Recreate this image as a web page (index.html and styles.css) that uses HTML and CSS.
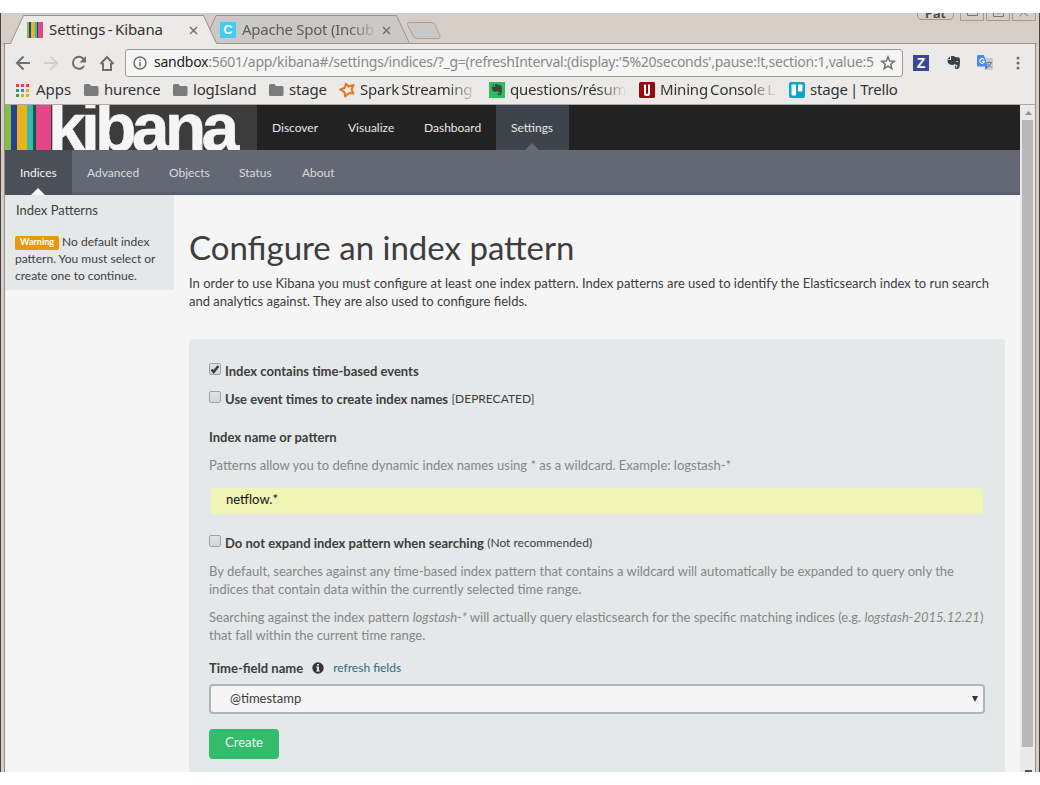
FILE: index.html
```html
<!DOCTYPE html>
<html lang="en">
<head>
<meta charset="utf-8">
<title>Settings - Kibana</title>
<link rel="stylesheet" href="styles.css">
</head>
<body>
<div class="window">
  <div class="tabstrip">
    <svg class="tab-shapes" width="1040" height="31" viewBox="0 13 1040 31">
      <path d="M3 43.5H1037" stroke="#9a948c" fill="none"/>
      <path d="M209.500 30L216 15.500H396.500L409.500 43.500H216.500Z" fill="#cac9c7" stroke="#9a948c"/>
      <path d="M3.500 44V43.500H10.500L23.500 15.500H203.500L216.500 43.500V44.500H3.500Z" fill="#ebeae8"/>
      <path d="M3.500 43.500H10.500L23.500 15.500H203.500L216.500 43.500" fill="none" stroke="#9a948c"/>
      <path d="M409.500 22.500H432Q434 22.500 434.600 24L440 36Q440.700 38.500 438.500 38.500H416.500Q414.500 38.500 413.700 37L407.500 24.500Q407 22.500 409.500 22.500Z" fill="#cac9c7" stroke="#a5a19b"/>
      <g fill="none" stroke="#9f9994">
        <path d="M917.500 13V15Q917.500 19.500 922 19.500H949Q953.500 19.500 953.500 15V13"/>
        <path d="M960.500 13V20.500H983.500V13M986.500 13V20.500H1009.500V13M1012.500 13V20.500H1035.500V13"/>
      </g>
      <g fill="none" stroke="#77736f"><path d="M967.500 13V15.500H977.500V13M993.500 13V16.500H1003.500V13M996.500 13H1000.500M1019.500 16L1023.500 12.500L1028 16"/></g>
      <text class="profile" x="925" y="18">Pat</text>
    </svg>
    <div class="tab tab-one">
      <svg width="16" height="16" shape-rendering="crispEdges"><path fill="#7fbf3f" d="M0 0h2v16H0z"/><path fill="#27408f" d="M2 0h2v16H2z"/><path fill="#e8b31c" d="M4 0h4v16H4z"/><path fill="#3ab7ae" d="M8 0h2v16H8z"/><path fill="#075b4f" d="M10 0h1v16h-1z"/><path fill="#e64588" d="M11 0h5v16h-5z"/></svg>
      <span class="tab-title t-settings">Settings - Kibana</span>
      <svg class="close" width="9" height="9"><path d="M1 1l7 7M8 1l-7 7" stroke="#737373" stroke-width="1.500"/></svg>
    </div>
    <div class="tab tab-two">
      <span class="c-icon">C</span>
      <span class="tab-title t-spot">Apache Spot (Incub</span>
      <svg class="close" width="9" height="9"><path d="M1 1l7 7M8 1l-7 7" stroke="#737373" stroke-width="1.500"/></svg>
    </div>
  </div>

  <div class="toolbar">
    <div class="nav-icons">
      <svg width="110" height="28" viewBox="10 48 110 28" fill="none" stroke="#6e6e6e" stroke-width="2">
        <path d="M30 62H17M23.500 55.500L17 62L23.500 68.500"/>
        <path d="M44 62H57M50.500 55.500L57 62L50.500 68.500" stroke="#cfcecc"/>
        <path d="M84 65A6 6 0 1 1 83.500 58"/><path d="M86 55V61.500H79.500Z" fill="#6e6e6e" stroke="none"/>
        <path d="M100.500 63L107 56L113.500 63M103 62V69H111V62" stroke-width="2"/>
      </svg>
    </div>
    <div class="omnibox">
      <svg width="14" height="14" fill="none" stroke="#6e6e6e" stroke-width="1.500"><circle cx="7" cy="7" r="6"/><path d="M7 6v4.500M7 3.500v1.500"/></svg>
      <span class="url"><b>sandbox</b>:5601/app/kibana#/settings/indices/?_g=(refreshInterval:(display:'5%20seconds',pause:!t,section:1,value:5</span>
      <svg class="star" width="16" height="16"><path d="M8 1.800l1.700 4.200 4.500.3-3.500 2.900 1.200 4.500L8 11.200l-3.900 2.500 1.200-4.500-3.500-2.900 4.500-.3z" fill="none" stroke="#6e6e6e" stroke-width="1.400"/></svg>
    </div>
    <div class="extensions">
      <span class="z-icon">Z</span>
      <svg width="14" height="16" viewBox="0 0 14 16"><path fill="#39424a" d="M3 1.500L0.300 4.300H3zM4 1h3l1 1 4 .6c1.300.4 1.300 6 .5 9.500-.4 1.600-1.500 2-3 2-2 0-2.500-3.500-.3-3.600v1.300c-.8.300-.3 1 .4.900 1 0 1.100-2.700-.2-2.900-1 0-1.700-.6-2-.8-.2 1.300-3.500 1-5 .2C.8 8.500.4 6 .5 5H4z"/><path d="M9.500 6.500h1.500" stroke="#ddd"/></svg>
      <svg width="17" height="16" viewBox="0 0 17 16"><path fill="#c9cbce" d="M7 3h8q1 0 1 1v10q0 1-1 1h-6z"/><path fill="#4889f0" d="M1.200 0H7l3.800 11.500H1.200Q0 11.500 0 10.300V1.200Q0 0 1.200 0z"/><path fill="#2c62c9" d="M8 11.500h3L8.500 15z"/><path d="M7 4.700A2.300 2.300 0 1 0 7.300 6.500H5" fill="none" stroke="#fff" stroke-width="1.100"/><path d="M10 7.500h5M12.500 6.500v1M14 8q-1 3-3.500 4M11 8.500q1 2.500 3.500 4" stroke="#66788a" fill="none"/></svg>
      <svg class="dots" width="4" height="14" fill="#6e6e6e"><circle cx="2" cy="2" r="1.500"/><circle cx="2" cy="7" r="1.500"/><circle cx="2" cy="12" r="1.500"/></svg>
    </div>
  </div>

  <div class="bookmarks">
    <div class="bm bm-apps"><svg width="13" height="13" shape-rendering="crispEdges"><path fill="#ea4335" d="M0 0h3v3H0zM5 0h3v3H5zM10 0h3v3h-3z"/><path fill="#34a05a" d="M0 5h3v3H0zM0 10h3v3H0z"/><path fill="#3b82ee" d="M5 5h3v3H5z"/><path fill="#f4a60b" d="M10 5h3v3h-3zM5 10h3v3H5zM10 10h3v3h-3z"/></svg><span>Apps</span></div>
    <div class="bm bm-hurence"><svg width="15" height="12"><path class="folder" d="M1.500 0h4L7 2h6q1.500 0 1.500 1.500v7q0 1.500-1.500 1.500H1.500Q0 12 0 10.500v-9Q0 0 1.500 0z"/></svg><span>hurence</span></div>
    <div class="bm bm-log"><svg width="15" height="12"><path class="folder" d="M1.500 0h4L7 2h6q1.500 0 1.500 1.500v7q0 1.500-1.500 1.500H1.500Q0 12 0 10.500v-9Q0 0 1.500 0z"/></svg><span>logIsland</span></div>
    <div class="bm bm-stage"><svg width="15" height="12"><path class="folder" d="M1.500 0h4L7 2h6q1.500 0 1.500 1.500v7q0 1.500-1.500 1.500H1.500Q0 12 0 10.500v-9Q0 0 1.500 0z"/></svg><span>stage</span></div>
    <div class="bm bm-spark"><svg width="16" height="16"><path d="M7 1.700L9.500 4.500L14.500 3L12.500 7.500L14.500 11.500L10.200 11L6.200 14.500L5.500 10.200L1.200 7.500L5.500 6Z" fill="none" stroke="#e87424" stroke-width="2" stroke-linejoin="round"/></svg><span>Spark Streaming</span></div>
    <div class="bm bm-questions"><svg width="16" height="16"><path fill="#2dbe60" d="M0 0h16v16H0z"/><path fill="#3b4a40" d="M5 2L2.800 4.300H5zM6 2h2l1 .8 3 .5c1.200.4 1.200 5 .5 8-.3 1.700-1.200 2-2.500 2-1.800 0-2.200-3-.3-3v1c-.8.200-.2.800.4.800.8-.2.900-2.200-.2-2.400-.8 0-1.400-.4-1.700-.6-.3 1-3 .8-4.200.1C3 8 2.800 6 2.900 5H6z"/></svg><span>questions/résum</span></div>
    <div class="bm bm-mining"><svg width="16" height="16"><rect width="16" height="16" rx="1.500" fill="#930b0d"/><path d="M5 2.500h2V11q0 1 1 1t1-1V2.500h2V12q0 2-2 2H7q-2 0-2-2z" fill="#fff"/></svg><span>Mining Console L</span></div>
    <div class="bm bm-trello"><svg width="16" height="16"><rect width="16" height="16" rx="2" fill="#0aa5c9"/><rect x="2.500" y="2.500" width="4.500" height="11" rx=".7" fill="#fff"/><rect x="9" y="2.500" width="4.500" height="7" rx=".7" fill="#fff"/></svg><span>stage | Trello</span></div>
  </div>

  <div class="viewport">
    <div class="page">
      <nav class="main-nav">
        <div class="logo"><i class="s1"></i><i class="s2"></i><i class="s3"></i><i class="s4"></i><i class="s5"></i><i class="s6"></i><span>kibana</span></div>
        <a class="discover">Discover</a><a class="visualize">Visualize</a><a class="dashboard">Dashboard</a><a class="settings active">Settings</a>
      </nav>
      <nav class="sub-nav">
        <a class="indices active">Indices</a><a class="advanced">Advanced</a><a class="objects">Objects</a><a class="status">Status</a><a>About</a>
      </nav>
      <div class="columns">
        <aside class="sidebar">
          <h5>Index Patterns</h5>
          <p><span class="label">Warning</span> No default index<br>pattern. You must select or<br>create one to continue.</p>
        </aside>
        <main>
          <h1>Configure an index pattern</h1>
          <p class="intro">In order to use Kibana you must configure at least one index pattern. Index patterns are used to identify the Elasticsearch index to run search<br>and analytics against. They are also used to configure fields.</p>
          <form class="panel">
            <div class="check"><span class="box"><svg width="12" height="12"><path d="M2.500 6.500L4.700 9L9.300 3" fill="none" stroke="#3c3c3c" stroke-width="2.500"/></svg></span><b>Index contains time-based events</b></div>
            <div class="check"><span class="box"></span><b>Use event times to create index names</b>&nbsp;<small>[DEPRECATED]</small></div>
            <div class="field-label pattern-label">Index name or pattern</div>
            <p class="help">Patterns allow you to define dynamic index names using * as a wildcard. Example: logstash-*</p>
            <div class="input">netflow.*</div>
            <div class="check expand"><span class="box"></span><b>Do not expand index pattern when searching</b>&nbsp;<small>(Not recommended)</small></div>
            <p class="help">By default, searches against any time-based index pattern that contains a wildcard will automatically be expanded to query only the<br>indices that contain data within the currently selected time range.</p>
            <p class="help">Searching against the index pattern <em>logstash-*</em> will actually query elasticsearch for the specific matching indices (e.g. <em>logstash-2015.12.21</em>)<br>that fall within the current time range.</p>
            <div class="field-label time-label">Time-field name <svg width="12" height="12"><circle cx="6" cy="6" r="5.700" fill="#343434"/><path d="M5 2h2v1.600H5zM4.200 4.600H7v3.800h.8V9.600H4.200V8.400H5V5.700h-.8z" fill="#e4e8e8"/></svg><a>refresh fields</a></div>
            <div class="select"><span>@timestamp</span><svg width="6" height="6"><path d="M0 0h6L3 6z" fill="#343434"/></svg></div>
            <button type="button">Create</button>
          </form>
        </main>
      </div>
    </div>
    <div class="scrollbar"><svg width="7" height="4"><path d="M0 4L3.500 0L7 4z" fill="#929292"/></svg><div class="thumb"></div><div class="down"></div></div>
  </div>
</div>
</body>
</html>
```
FILE: styles.css
```css
* { box-sizing: border-box; }
body { margin: 0; background: #fff; overflow: hidden; }
.window {
  position: relative; margin-top: 13px; width: 1040px; height: 759px; overflow: hidden;
  background: #ebeae8; font-family: "Noto Sans", sans-serif; color: #333;
  border-left: 1px solid #434240; border-right: 1px solid #434240;
}
.window::before, .window::after {
  content: ""; position: absolute; z-index: 2; top: 31px; bottom: 0; width: 3px; background: #d6cdc7;
}
.window::before { left: 0; border-right: 1px solid #998d85; }
.window::after { right: 0; border-left: 1px solid #998d85; }
.tabstrip { position: relative; height: 31px; background: #d6cdc7; display: flex; }
.tab-shapes { position: absolute; left: -1px; top: 0; }
.profile { font-size: 13px; font-weight: 600; fill: #444; }
.tab { position: relative; display: flex; align-items: center; height: 30px; padding-top: 4px; white-space: nowrap; }
.tab-one { margin-left: 26px; width: 193px; }
.tab-title { margin-left: 6px; margin-top: -2px; font-size: 15px; line-height: 20px; }
.t-settings { width: 140px; letter-spacing: -0.1px; word-spacing: -1.300px; }
.t-spot { width: 140px; overflow: hidden; letter-spacing: -0.25px; color: #5b5b5b; -webkit-mask-image: linear-gradient(90deg, #000 108px, transparent 136px); mask-image: linear-gradient(90deg, #000 108px, transparent 136px); }
.c-icon { width: 16px; height: 16px; background: #44cbf5; color: #fff; font: bold 13px/16px "Liberation Sans", sans-serif; text-align: center; }
.toolbar { height: 37px; display: flex; align-items: center; }
.nav-icons { width: 124px; padding-left: 9px; line-height: 0; }
.omnibox { width: 778px; height: 28px; display: flex; align-items: center; padding-left: 7px; background: #f5f5f5; border: 1px solid #9d9993; border-radius: 3px; }
.url { width: 722px; margin-left: 7px; margin-top: -2px; overflow: hidden; white-space: nowrap; color: #898989; font-size: 14px; line-height: 22px; letter-spacing: -0.25px; }
.url b { font-weight: 400; color: #222; }
.star { margin-left: 4px; }
.extensions { display: flex; align-items: center; margin-left: 10px; }
.z-icon { width: 16px; height: 16px; background: #3b4895; color: #fff; font: bold 14px/16px "Liberation Sans", sans-serif; text-align: center; }
.extensions svg { margin-left: 18px; }
.extensions svg + svg { margin-left: 16px; }
.extensions .dots.dots { margin-left: 22px; }
.bookmarks { height: 24px; display: flex; align-items: flex-start; padding-left: 15px; border-bottom: 1px solid #a9a8a6; font-size: 15px; line-height: 20px; white-space: nowrap; letter-spacing: -0.2px; word-spacing: -1.500px; }
.bm { display: flex; align-items: center; height: 18px; flex: none; }
.bm span { margin-left: 5px; margin-top: -2px; overflow: hidden; }
.folder { fill: #7b7b7b; }
.bm-apps { width: 68px; } .bm-apps span { margin-left: 7px; letter-spacing: 0; }
.bm-hurence { width: 89px; } .bm-log { width: 96px; } .bm-stage { width: 70px; }
.bm-spark { width: 150px; } .bm-questions { width: 150px; } .bm-mining { width: 150px; }
.bm-spark span, .bm-questions span, .bm-mining span { width: 116px; -webkit-mask-image: linear-gradient(90deg, #000 88px, transparent 117px); mask-image: linear-gradient(90deg, #000 88px, transparent 117px); }
.viewport { margin-left: 4px; height: 667px; width: 1031px; display: flex; font-family: Lato, sans-serif; color: #3d3d3d; }
.page { width: 1015px; background: #f5f5f5; font-size: 13.020px; line-height: 18px; }
.main-nav, .sub-nav { display: flex; height: 45px; line-height: 45px; font-size: 12px; }
.main-nav { background: #222; color: #e8e8e8; }
.main-nav a, .sub-nav a { position: relative; padding-left: 15px; }
.logo { width: 252px; height: 45px; display: flex; background: #3c3c3c; overflow: hidden; }
.logo span { margin-left: -3px; font: bold 68px/68px "Liberation Sans", sans-serif; letter-spacing: -4.800px; color: #f5f5f5; margin-top: -12px; -webkit-text-stroke: 0.5px #f5f5f5; }
.s1 { width: 6px; background: #80c143; } .s2 { width: 6px; background: #27408f; } .s3 { width: 10px; background: #e8b31c; }
.s4 { width: 6px; background: #3ab7ae; } .s5 { width: 3px; background: #075b4f; } .s6 { width: 15px; background: #e64588; }
.discover { width: 76px; } .visualize { width: 76px; } .dashboard { width: 87px; } .settings { width: 73px; }
.settings.active { background: #3e444c; }
.active::after { content: ""; position: absolute; left: calc(50% - 7.500px); bottom: 0; border: 7px solid transparent; border-top: 0; border-bottom-color: #646872; }
.sub-nav { background: linear-gradient(#646872 41px, #555862); color: #d9dbdf; }
.indices { width: 67px; } .advanced { width: 82px; } .objects { width: 70px; } .status { width: 63px; }
.indices.active { background: #4b4f58; color: #f3f3f3; }
.indices.active::after { border-bottom-color: #f5f5f5; }
.columns { display: flex; height: 577px; overflow: hidden; }
.sidebar { width: 169px; height: 95px; background: #e4e8e8; padding: 6px 0 0 10px; font-size: 12px; line-height: 17px; white-space: nowrap; }
.sidebar h5 { margin: 0 0 14px 1px; font-size: 13px; line-height: 18px; font-weight: 400; }
.sidebar p { margin: 0; }
.label { display: inline-block; width: 44px; height: 14px; margin-top: 3px; background: #e9990f; border-radius: 2px; color: #fff; font-weight: 700; font-size: 9px; line-height: 12px; text-align: center; vertical-align: top; }
main { width: 816px; margin-left: 15px; white-space: nowrap; }
h1 { margin: 33px 0 0; height: 46px; font-size: 33px; line-height: 38px; font-weight: 400; }
.intro { margin: 0 0 29px; }
.panel { height: 440px; background: #e4e8e8; border-radius: 4px 4px 0 0; padding: 23px 20px 0; }
.check { display: flex; align-items: center; height: 18px; margin-bottom: 10px; }
.check small { font-size: 12px; }
.box { width: 12px; height: 12px; margin: -4px 4px 0 0; border: 1px solid #a1a1a1; border-radius: 2px; background: linear-gradient(#e2e2e2, #d6d5d5); line-height: 0; }
.box svg { margin: -1px; }
.field-label { font-weight: 700; }
.pattern-label { margin: 20px 0 10px; }
.help { margin: 0 0 10px; color: #848686; }
.input { margin: 14px 2px 20px; height: 26px; padding-left: 15px; border-radius: 2px; background: #f0f4b5; color: #111; line-height: 23px; }
.time-label { display: flex; align-items: center; margin-top: 15px; }
.time-label svg { margin: 0 9px; }
.time-label a { color: #2f6d80; font-weight: 400; font-size: 12px; }
.select { margin-top: 7px; height: 30px; display: flex; align-items: center; justify-content: space-between; border: 2px solid #adb5bb; border-radius: 4px; background: #f5f5f5; padding: 0 5px 2px 19px; }
.select svg { margin-top: 2px; }
button { display: block; margin-top: 15px; width: 70px; height: 30px; border: 0; border-radius: 4px; padding: 0 0 4px; background: #31bd6c; color: #f5f5f5; font: 13px Lato, sans-serif; }
.scrollbar { width: 16px; background: #e9e9e9; padding-top: 6px; display: flex; flex-direction: column; align-items: center; }
.thumb { margin: 5px 2px 0 1px; width: 11px; height: 627px; background: #b8b8b8; }
.down { margin-top: 23px; height: 2px; width: 7px; background: #555; }
```
